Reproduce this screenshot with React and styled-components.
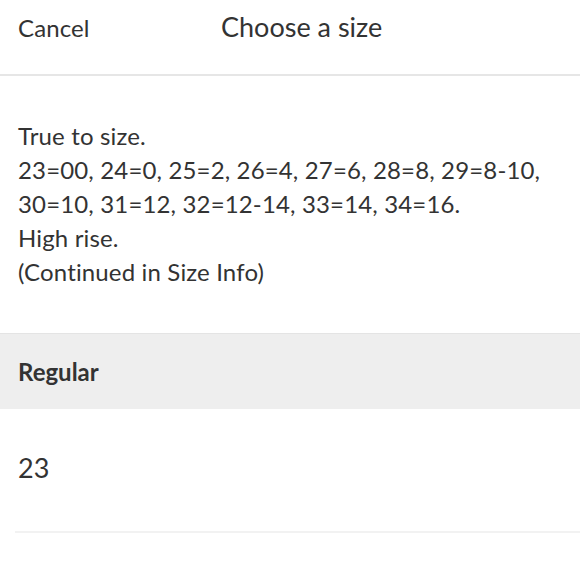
import styled, { createGlobalStyle } from 'styled-components'

const Global = createGlobalStyle`
  body {
    margin: 0;
    background: #fff;
    font-family: Lato, 'Noto Sans', sans-serif;
    color: #333;
  }
`

const Page = styled.div`
  width: 580px;
  height: 580px;
  overflow: hidden;
  display: flex;
  flex-direction: column;
`

const Header = styled.header`
  height: 76px;
  display: flex;
  align-items: baseline;
  padding: 10px 18px 0;
  box-sizing: border-box;
  border-bottom: 2px solid #e6e6e6;
`

const Cancel = styled.button`
  font: inherit;
  font-size: 24px;
  letter-spacing: 0.1px;
  color: #333;
  background: none;
  border: 0;
  padding: 0;
  width: 203px;
  text-align: left;
  cursor: pointer;
`

const Title = styled.h1`
  margin: 0;
  font-size: 27px;
  font-weight: 400;
  color: #333;
`

const Blurb = styled.div`
  padding: 43px 18px 0;
  font-size: 24px;
  letter-spacing: 0.15px;
  line-height: 34px;
  height: 257px;
  box-sizing: border-box;
`

const GroupLabel = styled.div`
  height: 76px;
  background: #eee;
  border-top: 1px solid #e4e4e4;
  display: flex;
  align-items: center;
  padding: 0 18px;
  font-size: 24px;
  font-weight: 700;
  box-sizing: border-box;
`

const SizeRow = styled.div`
  margin-left: 15px;
  padding: 0 0 6px 3px;
  height: 124px;
  display: flex;
  align-items: center;
  font-size: 27px;
  border-bottom: 2px solid #f2f2f2;
  box-sizing: border-box;
`

export default function App() {
  return (
    <Page>
      <Global />
      <Header>
        <Cancel>Cancel</Cancel>
        <Title>Choose a size</Title>
      </Header>
      <Blurb>
        True to size.
        <br />
        23=00, 24=0, 25=2, 26=4, 27=6, 28=8, 29=8-10,
        <br />
        30=10, 31=12, 32=12-14, 33=14, 34=16.
        <br />
        High rise.
        <br />
        (Continued in Size Info)
      </Blurb>
      <GroupLabel>Regular</GroupLabel>
      <SizeRow>23</SizeRow>
    </Page>
  )
}
